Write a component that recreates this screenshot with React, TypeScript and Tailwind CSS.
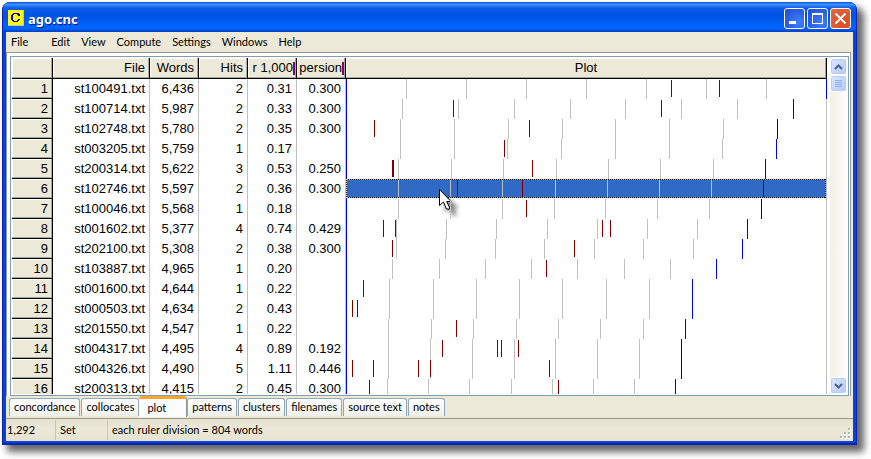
import { useState } from "react";

const MAX_WORDS = 6436;
const PLOT_WIDTH = 480;

type Row = {
  file: string;
  words: number;
  perThousand: string;
  dispersion: string;
  hits: number;
  marks: number[];
};

const rows: Row[] = [
  { file: "st100491.txt", words: 6436, hits: 2, perThousand: "0.31", dispersion: "0.300", marks: [325, 373] },
  { file: "st100714.txt", words: 5987, hits: 2, perThousand: "0.33", dispersion: "0.300", marks: [107, 315] },
  { file: "st102748.txt", words: 5780, hits: 2, perThousand: "0.35", dispersion: "0.300", marks: [28, 183] },
  { file: "st003205.txt", words: 5759, hits: 1, perThousand: "0.17", dispersion: "", marks: [158] },
  { file: "st200314.txt", words: 5622, hits: 3, perThousand: "0.53", dispersion: "0.250", marks: [46, 47, 186] },
  { file: "st102746.txt", words: 5597, hits: 2, perThousand: "0.36", dispersion: "0.300", marks: [111, 176] },
  { file: "st100046.txt", words: 5568, hits: 1, perThousand: "0.18", dispersion: "", marks: [180] },
  { file: "st001602.txt", words: 5377, hits: 4, perThousand: "0.74", dispersion: "0.429", marks: [37, 49, 256, 264] },
  { file: "st202100.txt", words: 5308, hits: 2, perThousand: "0.38", dispersion: "0.300", marks: [46, 228] },
  { file: "st103887.txt", words: 4965, hits: 1, perThousand: "0.20", dispersion: "", marks: [200] },
  { file: "st001600.txt", words: 4644, hits: 1, perThousand: "0.22", dispersion: "", marks: [17] },
  { file: "st000503.txt", words: 4634, hits: 2, perThousand: "0.43", dispersion: "", marks: [6, 11] },
  { file: "st201550.txt", words: 4547, hits: 1, perThousand: "0.22", dispersion: "", marks: [110] },
  { file: "st004317.txt", words: 4495, hits: 4, perThousand: "0.89", dispersion: "0.192", marks: [96, 151, 155, 172] },
  { file: "st004326.txt", words: 4490, hits: 5, perThousand: "1.11", dispersion: "0.446", marks: [6, 27, 72, 84, 203] },
  { file: "st200313.txt", words: 4415, hits: 2, perThousand: "0.45", dispersion: "0.300", marks: [23, 212] },
];

const tabs = ["concordance", "collocates", "plot", "patterns", "clusters", "filenames", "source text", "notes"];

function Plot({ row, selected }: { row: Row; selected: boolean }) {
  const end = Math.round((PLOT_WIDTH * row.words) / MAX_WORDS);
  const ruler = [1, 2, 3, 4, 5, 6, 7].map((k) => Math.round((end * k) / 8));

  return (
    <svg
      className="block h-5 w-full"
      viewBox="0 0 481 20"
      preserveAspectRatio="none"
      shapeRendering="crispEdges"
      role="img"
      aria-label={`Plot of ${row.file}`}
    >
      <rect x="480" width="1" height="20" fill="#c0c0c0" />
      {selected && (
        <>
          <rect width="480" height="19" fill="#316ac5" />
          <path d="M0 .5H480M0 18.5H480M479.5 0V19" stroke="#e8a33d" fill="none" />
          <path d="M0 .5H480M0 18.5H480M479.5 0V19" stroke="#000" strokeDasharray="1 1" fill="none" />
        </>
      )}
      {ruler.map((x) => (
        <rect key={x} x={x} y={selected ? 1 : 0} width="1" height={selected ? 17 : 20} fill="#c0c0c0" />
      ))}
      <rect width="1" height="20" fill="#0000ff" />
      {selected && <path d="M.5 0V19" stroke="#ffff00" strokeDasharray="1 1" />}
      <rect x={end} y={selected ? 1 : 0} width="1" height={selected ? 17 : 20} fill="#0000e8" />
      {row.marks.map((x) => (
        <rect key={x} x={x} y="1" width="1" height="17" fill="#800000" />
      ))}
    </svg>
  );
}

function Pointer() {
  return (
    <svg className="pointer-events-none absolute top-[10px] left-[93px] h-8 w-6" viewBox="0 0 24 32" aria-hidden="true">
      <path d="M6 7v16l4-3 4 7 4-1-3-7h5z" className="fill-black/50 blur-[2px]" />
      <path d="M.5 .5v16l4-3.5 3 7h3l-.2-2-2.600-5.500h4.300z" fill="#fff" stroke="#000" />
    </svg>
  );
}

const headCell =
  "h-5 border-r border-b border-black bg-[#ece9d8] p-0 text-right font-normal shadow-[inset_-1px_-1px_0_#aca899,inset_1px_1px_0_#fff]";
const dataCell = "border-r border-[#c0c0c0] px-1 py-0 text-right";

function Grid() {
  return (
    <table className="w-full table-fixed border-separate border-spacing-0 font-['Liberation_Sans',sans-serif] text-[13px] leading-5 text-black">
      <colgroup>
        <col className="w-[41px]" />
        <col className="w-[97px]" />
        <col className="w-[49px]" />
        <col className="w-[49px]" />
        <col className="w-[49px]" />
        <col className="w-[49px]" />
        <col />
      </colgroup>
      <thead>
        <tr>
          <th className={headCell} aria-label="Row" />
          <th className={headCell}><span className="px-1">File</span></th>
          <th className={headCell}><span className="px-1">Words</span></th>
          <th className={headCell}><span className="px-1">Hits</span></th>
          <th className={headCell}>
            <div className="mr-px flex h-[18px] items-center justify-end">
              <span className="whitespace-nowrap">r 1,000</span>
              <span className="h-[13px] w-[2px] bg-[#800080]" />
            </div>
          </th>
          <th className={headCell}>
            <div className="mr-px flex h-[18px] items-center justify-end">
              <span>persion</span>
              <span className="h-[13px] w-[2px] bg-[#800080]" />
            </div>
          </th>
          <th className={headCell}><div className="text-center">Plot</div></th>
        </tr>
      </thead>
      <tbody>
        {rows.map((row, i) => (
          <tr key={row.file}>
            <th className={headCell} scope="row"><div className="h-[19px] px-1">{i + 1}</div></th>
            <td className={dataCell}>{row.file}</td>
            <td className={dataCell}>{row.words.toLocaleString("en-US")}</td>
            <td className={dataCell}>{row.hits}</td>
            <td className={dataCell}>{row.perThousand}</td>
            <td className={dataCell}>{row.dispersion}</td>
            <td className="relative p-0">
              <Plot row={row} selected={i === 5} />
              {i === 5 && <Pointer />}
            </td>
          </tr>
        ))}
      </tbody>
    </table>
  );
}

const scrollButton =
  "flex h-[17px] w-[17px] items-center justify-center rounded-[3px] border border-white bg-linear-to-br from-[#dce6ff] to-[#b3c8fa] shadow-[inset_0_0_0_1px_#b7cbf5]";

function ScrollBar() {
  return (
    <div className="flex w-[17px] shrink-0 flex-col bg-linear-to-r from-[#f0efe8] to-[#fefefb]">
      <button className={scrollButton} aria-label="Scroll up">
        <svg width="9" height="6" viewBox="0 0 9 6"><path d="M1 5l3.500-3.500L8 5" fill="none" stroke="#4d6185" strokeWidth="2" /></svg>
      </button>
      <button className={scrollButton} aria-label="Scroll position">
        <svg width="7" height="8" viewBox="0 0 7 8" shapeRendering="crispEdges"><path d="M0 .5h7M0 2.500h7M0 4.500h7M0 6.500h7" stroke="#8cb0f8" /></svg>
      </button>
      <div className="flex-1" />
      <button className={scrollButton} aria-label="Scroll down">
        <svg width="9" height="6" viewBox="0 0 9 6"><path d="M1 1l3.500 3.500L8 1" fill="none" stroke="#4d6185" strokeWidth="2" /></svg>
      </button>
    </div>
  );
}

const captionButton = "flex h-[21px] w-[21px] items-center justify-center rounded-[3px] border border-white";
const blueButton = `${captionButton} bg-radial-[at_70%_70%] from-[#3f80ff] to-[#1e49cc]`;

function TitleBar() {
  return (
    <header className="flex h-[30px] shrink-0 items-center rounded-t-[7px] bg-[linear-gradient(#0a50d8,#3c93ff_8%,#0a5ce8_20%,#0054e3_45%,#0060fa_75%,#0066ff_88%,#003ec0)] px-[5px] pt-[2px]">
      <svg className="h-4 w-4" viewBox="0 0 16 16" shapeRendering="crispEdges" aria-hidden="true">
        <rect width="16" height="16" fill="#c0c0c0" />
        <rect width="15" height="15" fill="#ffff00" />
        <path
          d="M5 3h6v1h1v2h-2V5H9V4H6v1H5v5h1v1h3v-1h1V9h2v1h-1v1h-1v1H5v-1H4v-1H3V5h1V4h1z"
          fill="#0000e0"
        />
      </svg>
      <h1 className="ml-1 flex-1 pt-[2px] font-['Noto_Sans',sans-serif] text-[13px] leading-4 font-bold text-white [text-shadow:1px_1px_#0a1883]">
        ago.cnc
      </h1>
      <div className="flex gap-[2px]">
        <button className={blueButton} aria-label="Minimize">
          <svg width="19" height="19" shapeRendering="crispEdges"><rect x="4" y="12" width="7" height="3" fill="#fff" /></svg>
        </button>
        <button className={blueButton} aria-label="Maximize">
          <svg width="19" height="19" shapeRendering="crispEdges"><path d="M4 4h11v11H4zM5 6v8h9V6z" fill="#fff" fillRule="evenodd" /></svg>
        </button>
        <button className={`${captionButton} bg-radial-[at_70%_70%] from-[#e04a1c] to-[#e2684a]`} aria-label="Close">
          <svg width="19" height="19"><path d="M4.500 4.500l10 10M14.500 4.500l-10 10" stroke="#fff" strokeWidth="2" /></svg>
        </button>
      </div>
    </header>
  );
}

function MenuBar() {
  return (
    <nav className="flex h-5 shrink-0 items-center gap-[11px] px-[5px]">
      <button className="mr-3">File</button>
      <button>Edit</button>
      <button>View</button>
      <button>Compute</button>
      <button>Settings</button>
      <button>Windows</button>
      <button>Help</button>
    </nav>
  );
}

function SizeGrip() {
  return (
    <svg className="mr-[2px] mb-[2px] self-end" width="12" height="12" shapeRendering="crispEdges" aria-hidden="true">
      <path d="M9 1h3v3H9zM5 5h3v3H5zM9 5h3v3H9zM1 9h3v3H1zM5 9h3v3H5zM9 9h3v3H9z" fill="#fff" />
      <path d="M9 1h2v2H9zM5 5h2v2H5zM9 5h2v2H9zM1 9h2v2H1zM5 9h2v2H5zM9 9h2v2H9z" fill="#b8b4a3" />
    </svg>
  );
}

export default function App() {
  const [active, setActive] = useState("plot");

  return (
    <div className="h-screen overflow-hidden bg-white pt-[2px] pr-[14px] pb-[14px] pl-[2px] font-['Lato',sans-serif] text-[11px] text-black">
      <main className="flex h-full flex-col rounded-t-[8px] border-x border-b-2 border-[#0a24b0] bg-[#0a3fd8] shadow-[6px_6px_7px_1px_rgba(0,0,0,0.6)]">
        <TitleBar />
        <div className="flex min-h-0 flex-1 flex-col border-x-3 border-b-2 border-[#0842dc] bg-[#ece9d8]">
          <MenuBar />
          <div className="mr-[2px] flex min-h-0 flex-1 border border-b-0 border-[#919b9c] bg-white pt-[3px] pr-px pl-[3px]">
            <div className="flex min-h-0 min-w-0 flex-1 gap-[3px] border border-[#7f9db9] p-px">
              <div className="min-w-0 flex-1 overflow-hidden">
                <Grid />
              </div>
              <ScrollBar />
            </div>
          </div>
          <div className="flex h-[23px] shrink-0 items-start gap-px border-b border-[#9d9a8c] px-[3px]" role="tablist">
            {tabs.map((tab) => (
              <button
                key={tab}
                role="tab"
                aria-selected={tab === active}
                onClick={() => setActive(tab)}
                className={
                  tab === active
                    ? "-mx-px h-[21px] rounded-t-[3px] border-t-3 border-r border-t-[#ffa52d] border-r-[#919b9c] bg-[#fcfcfe] pr-5 pl-2"
                    : "mt-[2px] h-[18px] rounded-t-[3px] border border-b-0 border-[#91a7b4] bg-linear-to-b from-white to-[#f0f0ea] px-1"
                }
              >
                {tab}
              </button>
            ))}
          </div>
          <footer className="flex h-[22px] shrink-0 items-center bg-linear-to-b from-[#e4e1d0] via-[#ece9d8] to-[#e6e2cc]">
            <span className="w-[50px] border-r border-[#c9c6b6] pl-px leading-5">1,292</span>
            <span className="w-[52px] border-r border-[#c9c6b6] pl-1 leading-5">Set</span>
            <span className="flex-1 pl-1">each ruler division = 804 words</span>
            <SizeGrip />
          </footer>
        </div>
      </main>
    </div>
  );
}
